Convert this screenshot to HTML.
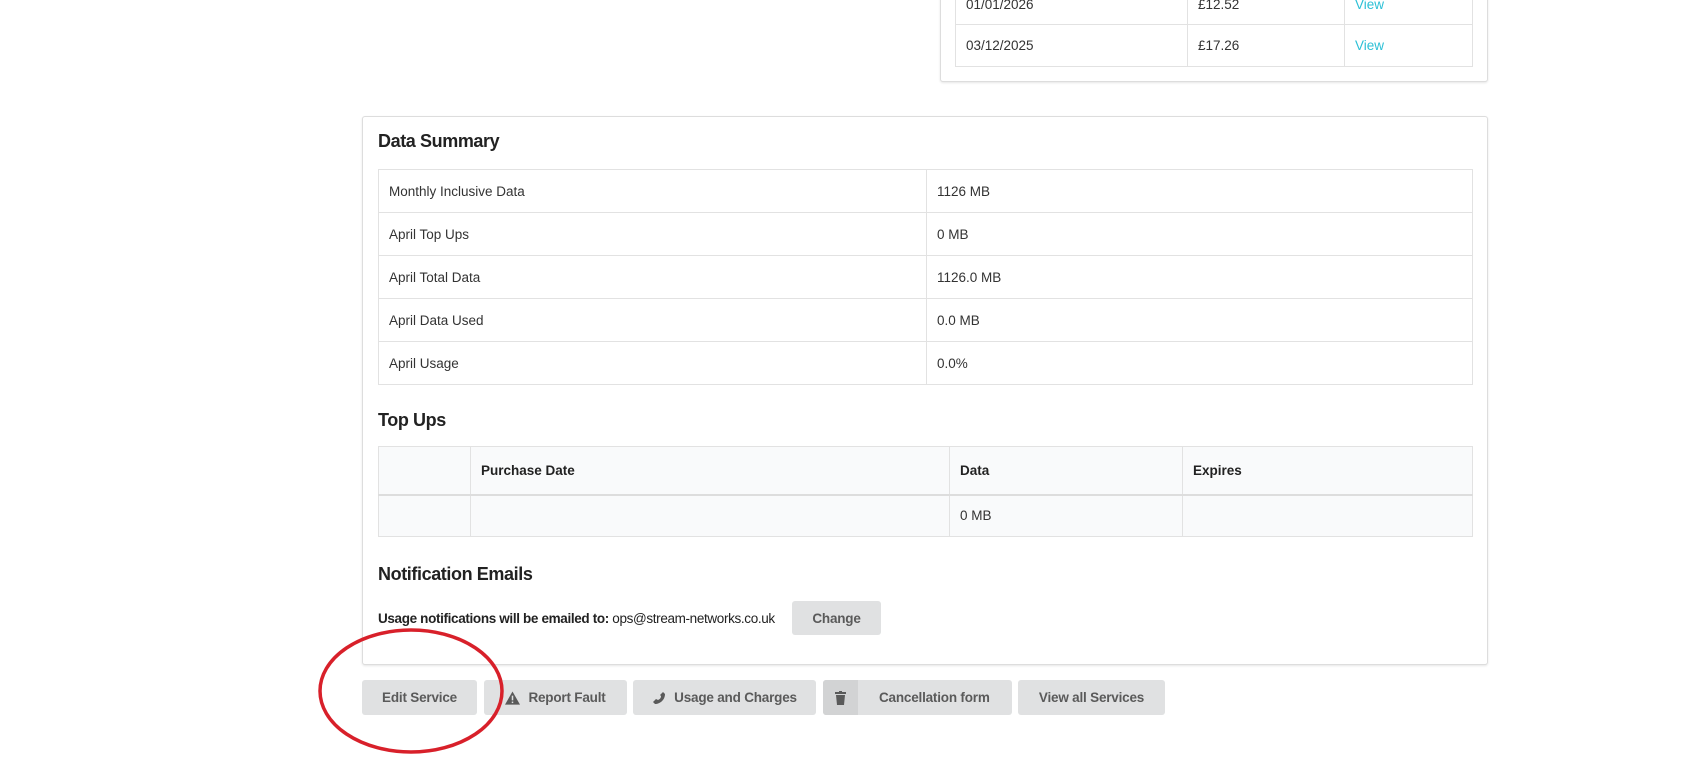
<!DOCTYPE html>
<html><head><meta charset="utf-8"><style>
*{box-sizing:border-box;margin:0;padding:0}
body{width:1706px;height:761px;background:#fff;font-family:"Liberation Sans",sans-serif;color:#333;position:relative;overflow:hidden;font-size:13.5px}
.abs{position:absolute}
.card{position:absolute;border:1px solid #ddd;border-radius:3px;background:#fff;box-shadow:0 1px 2px rgba(0,0,0,.1)}
table{border-collapse:collapse;position:absolute;table-layout:fixed}
td,th{border:1px solid #e2e2e2;padding:0 10px;text-align:left;font-weight:normal}
h3{position:absolute;font-size:18px;font-weight:bold;color:#222;letter-spacing:-0.4px}
.btn{position:absolute;top:680px;height:35px;background:#e0e1e2;border-radius:3px;color:#5a5a5a;font-weight:bold;font-size:13.5px;display:flex;align-items:center;justify-content:center;gap:8px;letter-spacing:-0.2px}
a{color:#2cc0d6;text-decoration:none}
</style></head><body>
<div class="card" style="left:940px;top:-10px;width:548px;height:92px"></div>
<table style="left:955px;top:-20px;width:518px">
<tr style="height:44px"><td style="width:232px;vertical-align:bottom;padding-bottom:12px">01/01/2026</td><td style="width:157px;vertical-align:bottom;padding-bottom:12px">£12.52</td><td style="vertical-align:bottom;padding-bottom:12px"><a>View</a></td></tr>
<tr style="height:42px"><td>03/12/2025</td><td>£17.26</td><td><a>View</a></td></tr>
</table>

<div class="card" style="left:362px;top:116px;width:1126px;height:549px"></div>
<h3 style="left:378px;top:131px">Data Summary</h3>
<table style="left:378px;top:169px;width:1095px">
<tr style="height:43px"><td style="width:548px">Monthly Inclusive Data</td><td>1126 MB</td></tr>
<tr style="height:43px"><td>April Top Ups</td><td>0 MB</td></tr>
<tr style="height:43px"><td>April Total Data</td><td>1126.0 MB</td></tr>
<tr style="height:43px"><td>April Data Used</td><td>0.0 MB</td></tr>
<tr style="height:43px"><td>April Usage</td><td>0.0%</td></tr>
</table>
<h3 style="left:378px;top:410px">Top Ups</h3>
<table style="left:378px;top:446px;width:1095px;background:#f9fafb">
<tr style="height:48px;border-bottom:2px solid #ddd"><th style="width:92px"></th><th style="width:479px;font-weight:bold;color:#222">Purchase Date</th><th style="width:233px;font-weight:bold;color:#222">Data</th><th style="font-weight:bold;color:#222">Expires</th></tr>
<tr style="height:42px"><td></td><td></td><td>0 MB</td><td></td></tr>
</table>
<h3 style="left:378px;top:564px">Notification Emails</h3>
<div class="abs" style="left:378px;top:611px;font-size:13.5px;color:#222;letter-spacing:-0.35px"><b>Usage notifications will be emailed to:</b> ops@stream-networks.co.uk</div>
<div class="btn" style="left:792px;top:601px;width:89px;height:34px">Change</div>

<div class="btn" style="left:362px;width:115px">Edit Service</div>
<div class="btn" style="left:484px;width:143px"><svg width="15" height="14" viewBox="0 0 16 14"><path d="M8 0L16 14H0Z" fill="#5a5a5a"/><rect x="7.2" y="4.5" width="1.6" height="5" fill="#e0e1e2"/><rect x="7.2" y="10.8" width="1.6" height="1.6" fill="#e0e1e2"/></svg>Report Fault</div>
<div class="btn" style="left:633px;width:183px"><svg width="14" height="14" viewBox="0 0 14 14"><path d="M11 1l2 2c0 6-5 10-10 10L1 11l3-3 2 1c2-1 3-2 3-4L8 4z" fill="#5a5a5a"/></svg>Usage and Charges</div>
<div class="btn" style="left:823px;width:189px;justify-content:flex-start;gap:0"><div style="width:35px;height:35px;background:#d2d3d4;border-radius:3px 0 0 3px;display:flex;align-items:center;justify-content:center"><svg width="11" height="14" viewBox="0 0 11 14"><rect x="0" y="1" width="11" height="2" fill="#5a5a5a"/><rect x="4" y="0" width="3" height="2" fill="#5a5a5a"/><path d="M1 4h9l-1 10H2z" fill="#5a5a5a"/></svg></div><span style="margin-left:21px">Cancellation form</span></div>
<div class="btn" style="left:1018px;width:147px">View all Services</div>

<svg class="abs" style="left:316px;top:626px" width="190" height="132"><ellipse cx="95" cy="65" rx="91" ry="61" fill="none" stroke="#d8202a" stroke-width="3.5"/></svg>
</body></html>
